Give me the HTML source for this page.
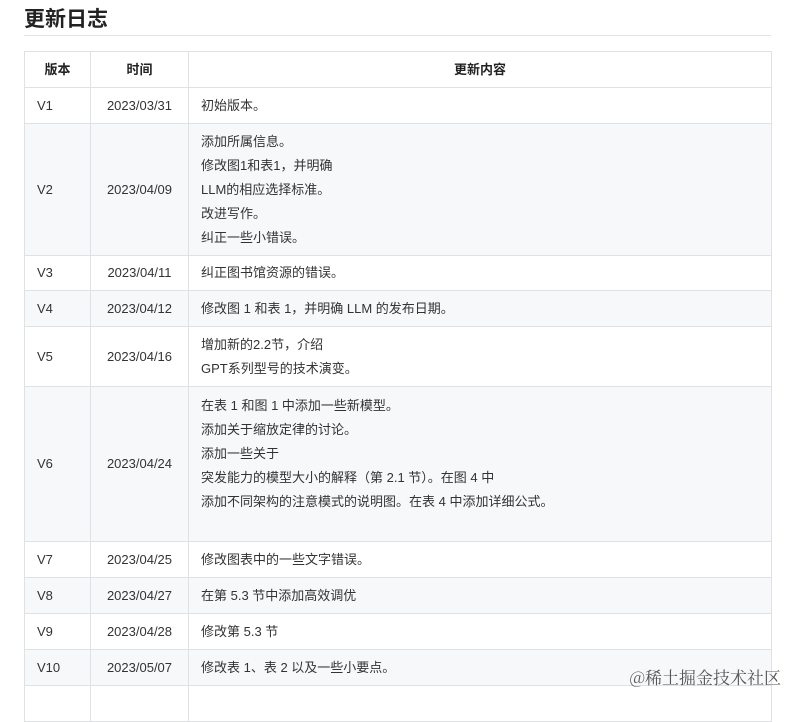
<!DOCTYPE html>
<html><head><meta charset="utf-8"><style>
body{margin:0;background:#fff;font-family:"Liberation Sans","Noto Sans CJK SC",sans-serif;color:#333;}
h2{position:absolute;left:24px;top:3px;margin:0;font-size:21px;font-weight:bold;color:#222;}
.hr{position:absolute;left:24px;top:35px;width:747px;height:1px;background:#e4e4e4;}
table{position:absolute;left:24px;top:51px;width:748px;border-collapse:collapse;font-size:13px;}
td,th{border:1px solid #dfe2e5;padding:0 12px;vertical-align:middle;line-height:24px;}
th{font-weight:bold;height:35px;text-align:center;color:#222;}
td:nth-child(2){text-align:center}
tr:nth-child(odd) td{background:#f6f8fa}
.wm{position:absolute;right:8px;top:664px;font-family:"Noto Serif CJK SC",serif;font-size:17px;color:#555;}
</style></head><body>
<h2>更新日志</h2><div class="hr"></div>
<table>
<colgroup><col style="width:66px"><col style="width:98px"><col></colgroup>
<tr><th>版本</th><th>时间</th><th>更新内容</th></tr>
<tr style="height:36px"><td>V1</td><td>2023/03/31</td><td>初始版本。</td></tr>
<tr style="height:132px"><td>V2</td><td>2023/04/09</td><td>添加所属信息。<br>修改图1和表1，并明确<br>LLM的相应选择标准。<br>改进写作。<br>纠正一些小错误。</td></tr>
<tr style="height:35px"><td>V3</td><td>2023/04/11</td><td>纠正图书馆资源的错误。</td></tr>
<tr style="height:36px"><td>V4</td><td>2023/04/12</td><td>修改图 1 和表 1，并明确 LLM 的发布日期。</td></tr>
<tr style="height:60px"><td>V5</td><td>2023/04/16</td><td>增加新的2.2节，介绍<br>GPT系列型号的技术演变。</td></tr>
<tr style="height:155px"><td>V6</td><td>2023/04/24</td><td style="vertical-align:top;padding-top:7px">在表 1 和图 1 中添加一些新模型。<br>添加关于缩放定律的讨论。<br>添加一些关于<br>突发能力的模型大小的解释（第 2.1 节）。在图 4 中<br>添加不同架构的注意模式的说明图。在表 4 中添加详细公式。</td></tr>
<tr style="height:36px"><td>V7</td><td>2023/04/25</td><td>修改图表中的一些文字错误。</td></tr>
<tr style="height:36px"><td>V8</td><td>2023/04/27</td><td>在第 5.3 节中添加高效调优</td></tr>
<tr style="height:36px"><td>V9</td><td>2023/04/28</td><td>修改第 5.3 节</td></tr>
<tr style="height:36px"><td>V10</td><td>2023/05/07</td><td>修改表 1、表 2 以及一些小要点。</td></tr>
<tr style="height:36px"><td></td><td></td><td></td></tr>
</table>
<div class="wm">@稀土掘金技术社区</div>
</body></html>
